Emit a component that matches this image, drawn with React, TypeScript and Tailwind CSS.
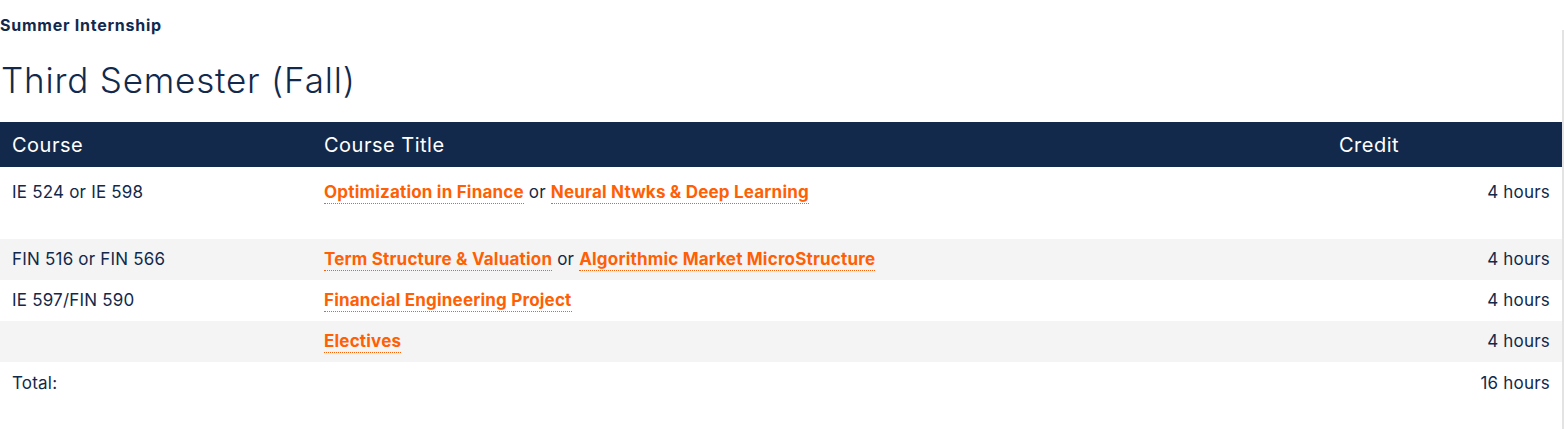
import React from 'react';

type Link = { label: string };

interface Row {
  code: string;
  titles: Link[];
  credit: string;
  shade?: boolean;
  tall?: boolean;
}

const rows: Row[] = [
  { code: 'IE 524 or IE 598', titles: [{ label: 'Optimization in Finance' }, { label: 'Neural Ntwks & Deep Learning' }], credit: '4 hours', tall: true },
  { code: 'FIN 516 or FIN 566', titles: [{ label: 'Term Structure & Valuation' }, { label: 'Algorithmic Market MicroStructure' }], credit: '4 hours', shade: true },
  { code: 'IE 597/FIN 590', titles: [{ label: 'Financial Engineering Project' }], credit: '4 hours' },
  { code: '', titles: [{ label: 'Electives' }], credit: '4 hours', shade: true },
];

const CourseLink: React.FC<{ label: string }> = ({ label }) => (
  <a href="#" className="font-bold text-[#ff5f05] border-b border-dotted border-[#ff5f05] pb-[1px]">
    {label}
  </a>
);

export default function App() {
  return (
    <div className="flex bg-white text-[#13294b] font-['Inter',sans-serif] min-h-[429px]">
      <div className="w-[1562px]">
        <h4 className="pt-[16px] text-[16px] font-bold leading-[18px] tracking-[0.75px]">Summer Internship</h4>
        <h2 className="mt-[26px] text-[35px] font-light leading-[40px] tracking-[0.8px] pl-[1px]">Third Semester (Fall)</h2>

        <div className="mt-[22px]">
          <div className="grid grid-cols-[312px_1015px_235px] h-[45px] items-center bg-[#13294b] text-white text-[20px] tracking-[0.5px]">
            <div className="px-3">Course</div>
            <div className="px-3">Course Title</div>
            <div className="px-3">Credit</div>
          </div>

          {rows.map((r, i) => (
            <div
              key={i}
              className={`grid grid-cols-[312px_1015px_235px] text-[17px] leading-[20px] tracking-[0.2px] ${r.tall ? 'h-[72px] pt-[15px]' : 'h-[41px] pt-[10px]'} ${r.shade ? 'bg-[#f4f4f4]' : 'bg-white'}`}
            >
              <div className="px-3">{r.code}</div>
              <div className="px-3">
                {r.titles.map((t, j) => (
                  <React.Fragment key={j}>
                    {j > 0 && <span> or </span>}
                    <CourseLink label={t.label} />
                  </React.Fragment>
                ))}
              </div>
              <div className="px-3 text-right">{r.credit}</div>
            </div>
          ))}

          <div className="grid grid-cols-[312px_1015px_235px] text-[17px] leading-[20px] tracking-[0.2px] pt-[11px] h-[41px]">
            <div className="px-3">Total:</div>
            <div className="px-3"></div>
            <div className="px-3 text-right">16 hours</div>
          </div>
        </div>
      </div>
      <div className="w-[2px] mt-[30px] bg-[#e3e3e3]"></div>
    </div>
  );
}
